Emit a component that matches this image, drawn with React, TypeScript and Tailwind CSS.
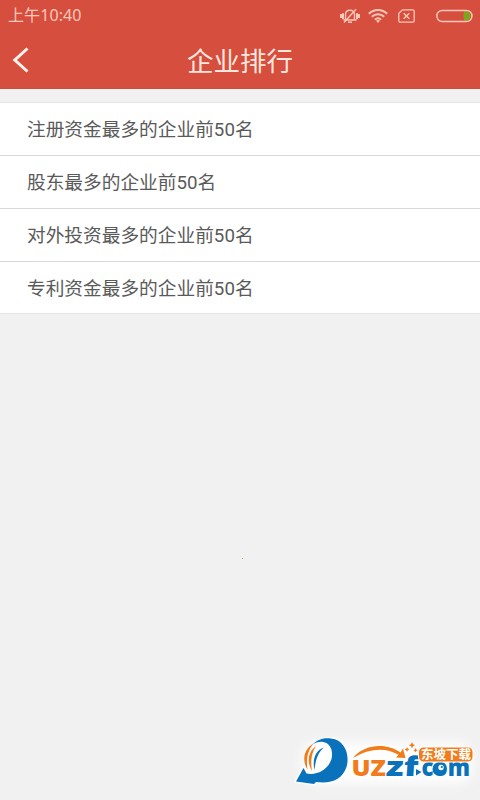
const rankings = [
  '注册资金最多的企业前50名',
  '股东最多的企业前50名',
  '对外投资最多的企业前50名',
  '专利资金最多的企业前50名',
];

function MutedBellIcon() {
  return (
    <svg className="h-4 w-5" viewBox="0 0 20 16" fill="none" stroke="currentColor" strokeWidth="1.4">
      <path d="M5.5 11.5V6.5C5.5 4 7.3 2.2 10 2.2s4.5 1.8 4.5 4.3v5M3.5 12h13M8 14.3h4" />
      <path d="M1 6v4M3 5.2v6M17 5.2v6M19 6v4" strokeWidth="2" />
      <path d="M4 14.5 16 1.2" />
    </svg>
  );
}

function WifiIcon() {
  return (
    <svg className="h-[14px] w-5" viewBox="0 0 20 14" fill="none" stroke="currentColor" strokeWidth="1.9">
      <path d="M.8 4.8C6-.3 14-.3 19.2 4.8M3.8 7.8c3.6-3.4 8.8-3.4 12.4 0M6.8 10.6c1.9-1.7 4.5-1.7 6.4 0" />
      <path d="m8 11.8 2 2.2 2-2.2a3 3 0 0 0-4 0Z" fill="currentColor" stroke="none" />
    </svg>
  );
}

function NoSimIcon() {
  return (
    <svg className="h-[14px] w-[17px]" viewBox="0 0 17 14" fill="none" stroke="currentColor" strokeWidth="1.3">
      <path d="M4.5.8h10.2q1.5 0 1.5 1.4v9.6q0 1.4-1.5 1.4H2.3Q.8 13.2.8 11.8V4.3Z" />
      <path d="m5.7 4.3 5.6 5.4m0-5.4L5.7 9.7" strokeWidth="1.5" />
    </svg>
  );
}

function BatteryIcon() {
  return (
    <svg className="h-[14px] w-[37px]" viewBox="0 0 37 14" fill="none">
      <path d="M30 2.3a4.7 4.7 0 0 1 0 9.4h-1.5q-2.3-4.7 0-9.4Z" fill="#7fa51c" />
      <rect x=".8" y="1.5" width="35.2" height="11" rx="5.5" stroke="currentColor" strokeWidth="1.4" />
    </svg>
  );
}

function SiteLogo() {
  return (
    <svg className="h-[70px] w-[190px]" viewBox="290 730 190 70">
      <defs>
        <filter id="glow" x="-20%" y="-40%" width="140%" height="180%">
          <feGaussianBlur stdDeviation="6" />
        </filter>
      </defs>
      <rect x="302" y="743" width="170" height="40" rx="14" fill="#fff" filter="url(#glow)" />

      {/* swirl with the arrow head */}
      <path
        d="M313 771.5C306 758 315 737.5 331 738.5C345 739.5 350 755 346.5 767C342 780 331 784 316 782L314 784L296 781.5L303.5 768L306.5 773.5Z"
        fill="#fff"
        stroke="#fff"
        strokeWidth="3"
        strokeLinejoin="round"
      />
      <path
        d="M312.5 744.5C318 739 325 737.5 331 738.5C345 740 350 755 346.5 767C342 780 331 784 316 782L314 784L296 781.5L303.5 768L306.5 773.5C317 775.5 328 770 331.500 759C333.500 750 330 743 323 742C319 741.500 316 742.500 312.500 744.500Z"
        fill="#0a72ba"
      />
      <path d="M314.500 770C312 760 315.500 750 324 747.500C318.500 752 315.500 759 314.500 770Z" fill="#0a72ba" />
      <path d="M307.5 769.5C301.5 760 304 749 313.5 743.5C307.500 751 306 759 307.5 769.5Z" fill="#f17c1c" />
      <path d="M312 771C306.500 762 308 752 316 746C311 754 310.500 762 312 771Z" fill="#f17c1c" />

      <path d="M353 758C365 743.5 387 743 400.5 752.5L403 748.5L405.5 758L396 757.5L398.5 754.8C386 747 369 748 353 758Z" fill="#f17c1c" />

      <g
        fontFamily="'Open Sans', 'Noto Sans', sans-serif"
        fontWeight="800"
        stroke="#fff"
        strokeWidth="1"
        paintOrder="stroke"
      >
        <text x="351.5" y="776" fontSize="22.5" fill="#f17c1c" textLength="34.5" lengthAdjust="spacingAndGlyphs">
          UZ
        </text>
        <text
          transform="translate(385.5 776) skewX(-4)"
          fontSize="27"
          fill="#0a72ba"
          textLength="32"
          lengthAdjust="spacingAndGlyphs"
        >
          zf
        </text>
        <text x="421.5" y="776" fontSize="24.5" fill="#0a72ba" textLength="48.5" lengthAdjust="spacingAndGlyphs">
          com
        </text>
      </g>
      <path d="m416 769 5.5 3-5.5 3.5Z" fill="#0a72ba" />
      <circle cx="439.5" cy="769" r="7" fill="#0a72ba" />
      <circle cx="441" cy="767.5" r="2.7" fill="#fff" />
      <circle cx="441.8" cy="767" r="1.1" fill="#0a72ba" />

      <rect x="418.5" y="747" width="54.5" height="15" rx="5" fill="#f17c1c" stroke="#fff" />
      <text
        x="421"
        y="759.3"
        fontFamily="'Noto Sans CJK SC', sans-serif"
        fontSize="12.5"
        fontWeight="700"
        fill="#fff"
        textLength="50"
      >
        东坡下载
      </text>
      <path
        d="m412 742 1 2.2 2.2 1-2.2 1-1 2.2-1-2.2-2.2-1 2.2-1ZM407 747l.8 1.7 1.7.8-1.7.8-.8 1.7-.8-1.7-1.7-.8 1.7-.8ZM415.5 748l.7 1.5 1.5.7-1.5.7-.7 1.5-.7-1.5-1.5-.7 1.5-.7Z"
        fill="#f17c1c"
      />
    </svg>
  );
}

export default function App() {
  return (
    <div className="relative flex h-[800px] w-[480px] flex-col overflow-hidden bg-[#f1f1f1] font-['Roboto','Noto_Sans_CJK_SC',sans-serif]">
      <header className="h-[89px] shrink-0 border-b border-[#c8503f] bg-[#d64e3e]">
        <div className="flex h-[31px] items-center justify-between pr-[7px] pl-2 text-[#ffc8ba]">
          <span className="font-['Noto_Sans','Noto_Sans_CJK_SC',sans-serif] text-[16px] leading-[31px] tracking-[0.1px]">
            上午10:40
          </span>
          <div className="flex items-center">
            <MutedBellIcon />
            <div className="mr-[10px] ml-2 flex">
              <WifiIcon />
            </div>
            <NoSimIcon />
            <div className="ml-[21px] flex">
              <BatteryIcon />
            </div>
          </div>
        </div>
        <div className="grid h-[57px] grid-cols-[48px_1fr_48px] items-center">
          <button type="button" aria-label="返回" className="pl-3 text-[#fff3ee]">
            <svg className="h-[26px] w-[18px]" viewBox="0 0 18 26" fill="none" stroke="currentColor" strokeWidth="3">
              <path d="M15.5 1.5 2.8 13l12.7 11.5" />
            </svg>
          </button>
          <h1 className="pt-[5px] text-center text-[26.5px] leading-[52px] text-[#ffe6de]">企业排行</h1>
        </div>
      </header>

      <ul className="mt-[13px] divide-y divide-[#d9d9d9] border-y border-[#e6e6e6] bg-white">
        {rankings.map((title) => (
          <li
            key={title}
            className="h-[53px] pl-[27px] text-[18.7px] leading-[54px] text-[#5a5a5a] last:h-[51px]"
          >
            {title}
          </li>
        ))}
      </ul>

      <span className="absolute top-[558px] left-[242px] size-px bg-[#a2b65c]" />
      <div className="absolute right-0 bottom-0">
        <SiteLogo />
      </div>
    </div>
  );
}
